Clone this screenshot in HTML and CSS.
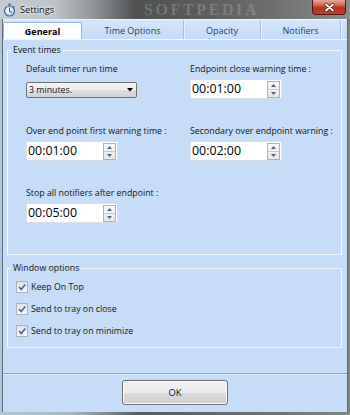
FILE: index.html
```html
<!DOCTYPE html>
<html>
<head>
<meta charset="utf-8">
<link rel="stylesheet" href="styles.css">
</head>
<body>
<div class="window">
  <div class="titlebar">
    <svg class="app-icon" width="13" height="14" viewBox="0 0 13 14">
      <defs>
        <radialGradient id="face" cx="0.4" cy="0.35" r="0.7">
          <stop offset="0" stop-color="#ffffff"/>
          <stop offset="1" stop-color="#b9cfe6"/>
        </radialGradient>
      </defs>
      <rect x="5" y="0.5" width="3" height="2" rx="0.5" fill="#5b7fa8"/>
      <path d="M10 3 L11.5 4.5" stroke="#5b7fa8" stroke-width="1.2"/>
      <circle cx="6.5" cy="8" r="5" fill="url(#face)" stroke="#3f6a9c" stroke-width="1.2"/>
      <path d="M6.5 8 L6.5 4.8 M6.5 8 L8.6 9.3" stroke="#2d4f7a" stroke-width="1" stroke-linecap="round"/>
    </svg>
    <span class="title">Settings</span>
    <span class="watermark">SOFTPEDIA</span>
    <div class="close">
      <svg width="11" height="9" viewBox="0 0 11 9">
        <path d="M2 1.5 L9 7.5 M9 1.5 L2 7.5" stroke="#5a1a12" stroke-width="3.2" stroke-linecap="round"/>
        <path d="M2 1.5 L9 7.5 M9 1.5 L2 7.5" stroke="#ffffff" stroke-width="1.8" stroke-linecap="round"/>
      </svg>
    </div>
  </div>

  <div class="client">
    <div class="tabs">
      <div class="tab tab-general active">General</div>
      <div class="tab tab-time">Time Options</div>
      <div class="tab tab-opacity">Opacity</div>
      <div class="tab tab-notifiers">Notifiers</div>
    </div>

    <div class="panel">
      <fieldset class="group events">
        <legend>Event times</legend>
        <div class="grid">
          <div class="field">
            <div class="label">Default timer run time</div>
            <div class="select">
              <span>3 minutes.</span>
              <svg width="6" height="4" viewBox="0 0 6 4"><path d="M0 0 H6 L3 3.5 Z" fill="#000"/></svg>
            </div>
          </div>
          <div class="field">
            <div class="label">Endpoint close warning time :</div>
            <div class="spin">
              <span class="val">00:01:00</span>
              <div class="btns">
                <span><svg width="5" height="3" viewBox="0 0 5 3"><path d="M0 3 L2.5 0 L5 3 Z" fill="#4e6387"/></svg></span>
                <span><svg width="5" height="3" viewBox="0 0 5 3"><path d="M0 0 L2.5 3 L5 0 Z" fill="#4e6387"/></svg></span>
              </div>
            </div>
          </div>
          <div class="field">
            <div class="label">Over end point first warning time :</div>
            <div class="spin">
              <span class="val">00:01:00</span>
              <div class="btns">
                <span><svg width="5" height="3" viewBox="0 0 5 3"><path d="M0 3 L2.5 0 L5 3 Z" fill="#4e6387"/></svg></span>
                <span><svg width="5" height="3" viewBox="0 0 5 3"><path d="M0 0 L2.5 3 L5 0 Z" fill="#4e6387"/></svg></span>
              </div>
            </div>
          </div>
          <div class="field">
            <div class="label">Secondary over endpoint warning :</div>
            <div class="spin">
              <span class="val">00:02:00</span>
              <div class="btns">
                <span><svg width="5" height="3" viewBox="0 0 5 3"><path d="M0 3 L2.5 0 L5 3 Z" fill="#4e6387"/></svg></span>
                <span><svg width="5" height="3" viewBox="0 0 5 3"><path d="M0 0 L2.5 3 L5 0 Z" fill="#4e6387"/></svg></span>
              </div>
            </div>
          </div>
          <div class="field">
            <div class="label">Stop all notifiers after endpoint :</div>
            <div class="spin">
              <span class="val">00:05:00</span>
              <div class="btns">
                <span><svg width="5" height="3" viewBox="0 0 5 3"><path d="M0 3 L2.5 0 L5 3 Z" fill="#4e6387"/></svg></span>
                <span><svg width="5" height="3" viewBox="0 0 5 3"><path d="M0 0 L2.5 3 L5 0 Z" fill="#4e6387"/></svg></span>
              </div>
            </div>
          </div>
        </div>
      </fieldset>

      <fieldset class="group winopts">
        <legend>Window options</legend>
        <div class="check">
          <span class="box"><svg width="10" height="10" viewBox="0 0 10 10"><path d="M2 5 L4.2 7.4 L8.2 2.4" fill="none" stroke="#4a6494" stroke-width="1.6"/></svg></span>
          <span>Keep On Top</span>
        </div>
        <div class="check">
          <span class="box"><svg width="10" height="10" viewBox="0 0 10 10"><path d="M2 5 L4.2 7.4 L8.2 2.4" fill="none" stroke="#4a6494" stroke-width="1.6"/></svg></span>
          <span>Send to tray on close</span>
        </div>
        <div class="check">
          <span class="box"><svg width="10" height="10" viewBox="0 0 10 10"><path d="M2 5 L4.2 7.4 L8.2 2.4" fill="none" stroke="#4a6494" stroke-width="1.6"/></svg></span>
          <span>Send to tray on minimize</span>
        </div>
      </fieldset>
    </div>

    <div class="footer">
      <button class="ok">OK</button>
    </div>
  </div>
</div>
</body>
</html>
```

FILE: styles.css
```css
html, body {
  margin: 0;
  padding: 0;
}
body {
  width: 350px;
  height: 415px;
  overflow: hidden;
  font-family: "Open Sans", "Noto Sans", sans-serif;
  font-size: 8.8px;
  color: #161616;
}
.window {
  width: 350px;
  height: 415px;
  display: flex;
  flex-direction: column;
  background: linear-gradient(90deg, #b5c5d5 0, #a8b7c3 20%, #585c5b 40%, #6a6d6b 70%, #7e8680 100%);
}

/* title bar */
.titlebar {
  height: 19px;
  flex: none;
  display: flex;
  align-items: center;
  overflow: hidden;
  background: linear-gradient(90deg, #c5ccd3 0, #bcc3c9 55px, #8f9396 95px, #4f5152 135px, #5b5c5c 200px, #6d6e6e 270px, #8a8e8c 350px);
}
.app-icon {
  margin-left: 3px;
  flex: none;
}
.title {
  margin-left: 4px;
  font-size: 9.2px;
  color: #111;
  text-shadow: 0 0 5px #fff, 0 0 3px #fff;
  flex: none;
}
.watermark {
  margin-left: 90px;
  font-family: "Liberation Serif", serif;
  font-weight: bold;
  font-size: 16px;
  letter-spacing: 2.6px;
  color: rgba(200, 200, 200, 0.28);
  line-height: 17px;
  flex: none;
}
.close {
  margin-left: auto;
  margin-right: 4px;
  align-self: flex-start;
  width: 34px;
  height: 15px;
  box-sizing: border-box;
  border: 1px solid #4f1a14;
  border-top: none;
  border-radius: 0 0 4px 4px;
  background: linear-gradient(#e7a89a 0, #d56a55 35%, #b8301b 55%, #c1412b 100%);
  display: flex;
  align-items: center;
  justify-content: center;
  flex: none;
}

/* client */
.client {
  flex: 1;
  margin: 0 2px 3px 2px;
  border-left: 1px solid #5d6e82;
  border-right: 1px solid #5f6a70;
  background: #c6dcf7;
  display: flex;
  flex-direction: column;
}
.tabs {
  height: 19px;
  flex: none;
  border-top: 1px solid #eef4fc;
  display: flex;
  align-items: stretch;
  background: linear-gradient(#d6e6f9, #c4daf6);
}
.tab {
  box-sizing: border-box;
  display: flex;
  align-items: center;
  justify-content: center;
  padding-top: 2px;
  color: #1f3f68;
  font-size: 9px;
  border-right: 1px solid #a9c0de;
  box-shadow: 1px 0 0 #e4eefa;
}
.tab-general { width: 79px; }
.tab-time { width: 102px; }
.tab-opacity { width: 77px; }
.tab-notifiers { width: 80px; }
.tab.active {
  margin-top: 2px;
  padding-top: 0;
  background: #fbfdff;
  border: 1px solid #9ab4d6;
  border-bottom: none;
  border-radius: 2px 2px 0 0;
  box-shadow: none;
  color: #000;
  font-weight: bold;
}

.panel {
  flex: none;
  height: 330px;
  border-top: 1px solid #f1f6fd;
  border-bottom: 1px solid #86a6d0;
  box-shadow: 0 1px 0 #e2edfa;
  padding: 3px 5px 0 4px;
}
.group {
  margin: 0;
  border: 1px solid #f3f7fd;
  padding: 5px 3px 31px;
  min-width: 0;
}
.group legend {
  padding: 0 2px;
  line-height: 14px;
  color: #161616;
}
.grid {
  display: grid;
  grid-template-columns: 164px auto;
  row-gap: 25px;
  margin-left: 15px;
}
.label {
  line-height: 14px;
  white-space: nowrap;
}
.select {
  margin-top: 6px;
  width: 111px;
  height: 16px;
  box-sizing: border-box;
  border: 1px solid #707070;
  border-radius: 2px;
  background: linear-gradient(#f4f4f4, #ececec 50%, #dfdfdf 50%, #d2d2d2);
  display: flex;
  align-items: center;
  justify-content: space-between;
  padding: 0 3px 0 2px;
  color: #111;
}
.spin {
  margin-top: 3px;
  width: 92px;
  height: 20px;
  box-sizing: border-box;
  background: #fff;
  border: 1px solid #d7e0ea;
  display: flex;
  align-items: center;
}
.spin .val {
  flex: 1;
  font-size: 12.4px;
  line-height: 18px;
  padding-left: 1px;
  color: #000;
}
.btns {
  width: 13px;
  height: 17px;
  box-sizing: border-box;
  border: 1px solid #aab3bd;
  margin-right: 1px;
  display: flex;
  flex-direction: column;
  background: linear-gradient(#fafafa, #e4e7eb);
}
.btns span {
  flex: 1;
  display: flex;
  align-items: center;
  justify-content: center;
}
.btns span + span {
  border-top: 1px solid #c6ccd4;
}

.winopts {
  margin-top: 6px;
  padding: 1px 3px 5px;
}
.check {
  display: flex;
  align-items: center;
  height: 22px;
  margin-left: 5px;
  gap: 3px;
}
.box {
  width: 12px;
  height: 12px;
  box-sizing: border-box;
  border: 1px solid #aeb3b9;
  background: linear-gradient(#dfe2e6, #f7f8f9);
  display: flex;
  align-items: center;
  justify-content: center;
}

.footer {
  flex: 1;
  display: flex;
  justify-content: center;
  align-items: flex-start;
  padding-top: 6px;
}
.ok {
  width: 106px;
  height: 25px;
  box-sizing: border-box;
  border: 1px solid #707070;
  border-radius: 3px;
  background: linear-gradient(#f2f2f2 0%, #ebebeb 50%, #dddddd 50%, #cfcfcf 100%);
  box-shadow: inset 0 0 0 1px #fbfbfb;
  font-family: "Open Sans", "Noto Sans", sans-serif;
  font-size: 9.4px;
  color: #111;
  padding: 0;
}
```
